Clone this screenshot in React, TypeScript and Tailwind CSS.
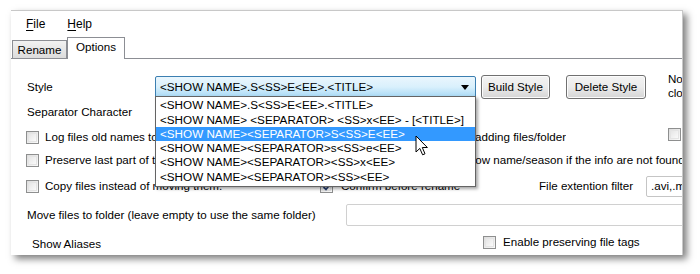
import React from "react";

const FONT = { fontFamily: '"Liberation Sans", Arial, sans-serif' };

function CheckBox({ checked = false }: { checked?: boolean }) {
  return (
    <span className="relative inline-block h-[13px] w-[13px] shrink-0 border border-[#8e8f8f] bg-gradient-to-br from-[#dcdcdc] to-[#fbfbfb]">
      <span className="absolute inset-[1px] border border-[#e4e4e4] bg-gradient-to-br from-[#e6e6e6] to-[#fafafa]" />
      {checked && (
        <svg className="absolute left-[1px] top-[1px]" width="10" height="10" viewBox="0 0 10 10">
          <path d="M1.5 5 L4 7.5 L8.5 1.8" fill="none" stroke="#2a3f6e" strokeWidth="1.8" />
        </svg>
      )}
    </span>
  );
}

function Button({ label, w }: { label: string; w: string }) {
  return (
    <div
      className={`${w} flex h-[24px] shrink-0 items-center justify-center rounded-[3px] border border-[#707070] bg-gradient-to-b from-[#f3f3f3] via-[#ebebeb] to-[#d5d5d5] shadow-[inset_0_0_0_1px_#fcfcfc]`}
    >
      {label}
    </div>
  );
}

const STYLES = [
  "<SHOW NAME>.S<SS>E<EE>.<TITLE>",
  "<SHOW NAME> <SEPARATOR> <SS>x<EE> - [<TITLE>]",
  "<SHOW NAME><SEPARATOR>S<SS>E<EE>",
  "<SHOW NAME><SEPARATOR>s<SS>e<EE>",
  "<SHOW NAME><SEPARATOR><SS>x<EE>",
  "<SHOW NAME><SEPARATOR><SS><EE>",
];

export default function App() {
  return (
    <div className="h-[274px] w-[700px] overflow-hidden bg-white pl-[11px] pt-[10px] text-[11.6px] text-black" style={FONT}>
      <div className="relative h-[245px] w-[672px] overflow-hidden border-r border-t border-[#c8c8c8] bg-white shadow-[4px_4px_7px_rgba(0,0,0,0.5)]">
        {/* Menu bar */}
        <div className="flex h-[25px] items-center gap-[22px] pl-[15px] pt-[1px] text-[12px]">
          <span>
            <span className="underline underline-offset-2">F</span>ile
          </span>
          <span>
            <span className="underline underline-offset-2">H</span>elp
          </span>
        </div>

        {/* Tabs */}
        <div className="flex h-[23px] items-end border-b border-[#8c8e94] pl-[1px]">
          <div className="flex h-[18px] w-[55px] items-center justify-center border border-b-0 border-[#8c8e94] bg-gradient-to-b from-[#f2f2f2] to-[#dcdcdc] pt-[1px]">
            Rename
          </div>
          <div className="-mb-px flex h-[22px] w-[58px] items-center justify-center border border-b-0 border-[#8c8e94] bg-white pb-[3px]">
            Options
          </div>
        </div>

        {/* Options content */}
        <div className="pl-[15px]">
          {/* Style row */}
          <div className="mt-[15px] flex h-[25px] items-center">
            <span className="w-[129px] shrink-0 pl-[1px]">Style</span>
            <div className="relative flex h-[22px] w-[321px] shrink-0 items-center rounded-[2px] border border-[#3c7fb1] bg-gradient-to-b from-[#eaf6fd] via-[#d9f0fc] to-[#a7d9f5] pl-[4px] text-[11.7px]">
              {STYLES[0]}
              <svg className="absolute right-[6px] top-[8px]" width="8" height="5" viewBox="0 0 8 5">
                <path d="M0 0 H8 L4 5 Z" fill="#000" />
              </svg>
            </div>
            <div className="ml-[5px] shrink-0">
              <Button label="Build Style" w="w-[69px]" />
            </div>
            <div className="ml-[16px] shrink-0">
              <Button label="Delete Style" w="w-[80px]" />
            </div>
            <div className="ml-[22px] mt-[-2px] shrink-0 whitespace-nowrap leading-[14px]">
              <div>Not</div>
              <div>close</div>
            </div>
          </div>

          {/* Separator row */}
          <div className="flex h-[25px] items-center pl-[1px]">Separator Character</div>

          {/* Log files row */}
          <div className="mt-[1px] flex h-[24px] items-center">
            <CheckBox />
            <span className="ml-[6px] w-[275px] shrink-0 whitespace-nowrap">Log files old names to a file</span>
            <CheckBox />
            <div className="ml-[8px] flex w-[225px] shrink-0 justify-end overflow-hidden whitespace-nowrap">
              Rename automatically when adding files/folder
            </div>
            <div className="ml-[102px] shrink-0">
              <CheckBox />
            </div>
          </div>

          {/* Preserve row */}
          <div className="flex h-[22px] items-center">
            <CheckBox />
            <span className="ml-[6px] w-[275px] shrink-0 whitespace-nowrap">Preserve last part of the file name</span>
            <CheckBox />
            <span className="ml-[8px] shrink-0 whitespace-nowrap pl-[122px]">show name/season if the info are not found</span>
          </div>

          {/* Copy row */}
          <div className="flex h-[30px] items-center">
            <CheckBox />
            <span className="ml-[6px] w-[275px] shrink-0 whitespace-nowrap">Copy files instead of moving them.</span>
            <CheckBox checked />
            <span className="ml-[8px] w-[198px] shrink-0 whitespace-nowrap">Confirm before rename</span>
            <span className="w-[107px] shrink-0 whitespace-nowrap">File extention filter</span>
            <div className="flex h-[21px] w-[60px] shrink-0 items-center rounded-[2px] border border-[#c5c5c5] pl-[4px]">
              .avi,.mkv
            </div>
          </div>

          {/* Move row */}
          <div className="flex h-[28px] items-center">
            <span className="w-[320px] shrink-0 whitespace-nowrap pl-[1px]">Move files to folder (leave empty to use the same folder)</span>
            <div className="h-[22px] w-[340px] shrink-0 rounded-[2px] border border-[#d0d0d0]" />
          </div>

          {/* Aliases row */}
          <div className="flex h-[26px] items-center">
            <span className="w-[457px] shrink-0 whitespace-nowrap pl-[6px] pt-[3px]">Show Aliases</span>
            <CheckBox />
            <span className="ml-[7px] shrink-0 whitespace-nowrap">Enable preserving file tags</span>
          </div>
        </div>

        {/* Open dropdown list */}
        <div className="absolute left-[144px] top-[85px] h-[91px] w-[321px] border border-[#646464] bg-white pt-[1px] shadow-[2px_2px_3px_rgba(0,0,0,0.35)]">
          {STYLES.map((s, i) => (
            <div
              key={s}
              className={`flex h-[14.3px] items-center whitespace-nowrap pl-[4px] text-[11.7px] leading-none ${
                i === 2 ? "bg-[#3399ff] text-white" : ""
              }`}
            >
              {s}
            </div>
          ))}
        </div>

        {/* Mouse cursor */}
        <svg className="absolute left-[404px] top-[124px]" width="14" height="22" viewBox="0 0 14 22">
          <path
            d="M1 1 L1 17 L4.8 13.4 L7.6 19.8 L10 18.8 L7.3 12.5 L12.4 12.5 Z"
            fill="#fff"
            stroke="#000"
            strokeWidth="1"
            strokeLinejoin="round"
          />
        </svg>
      </div>
    </div>
  );
}
